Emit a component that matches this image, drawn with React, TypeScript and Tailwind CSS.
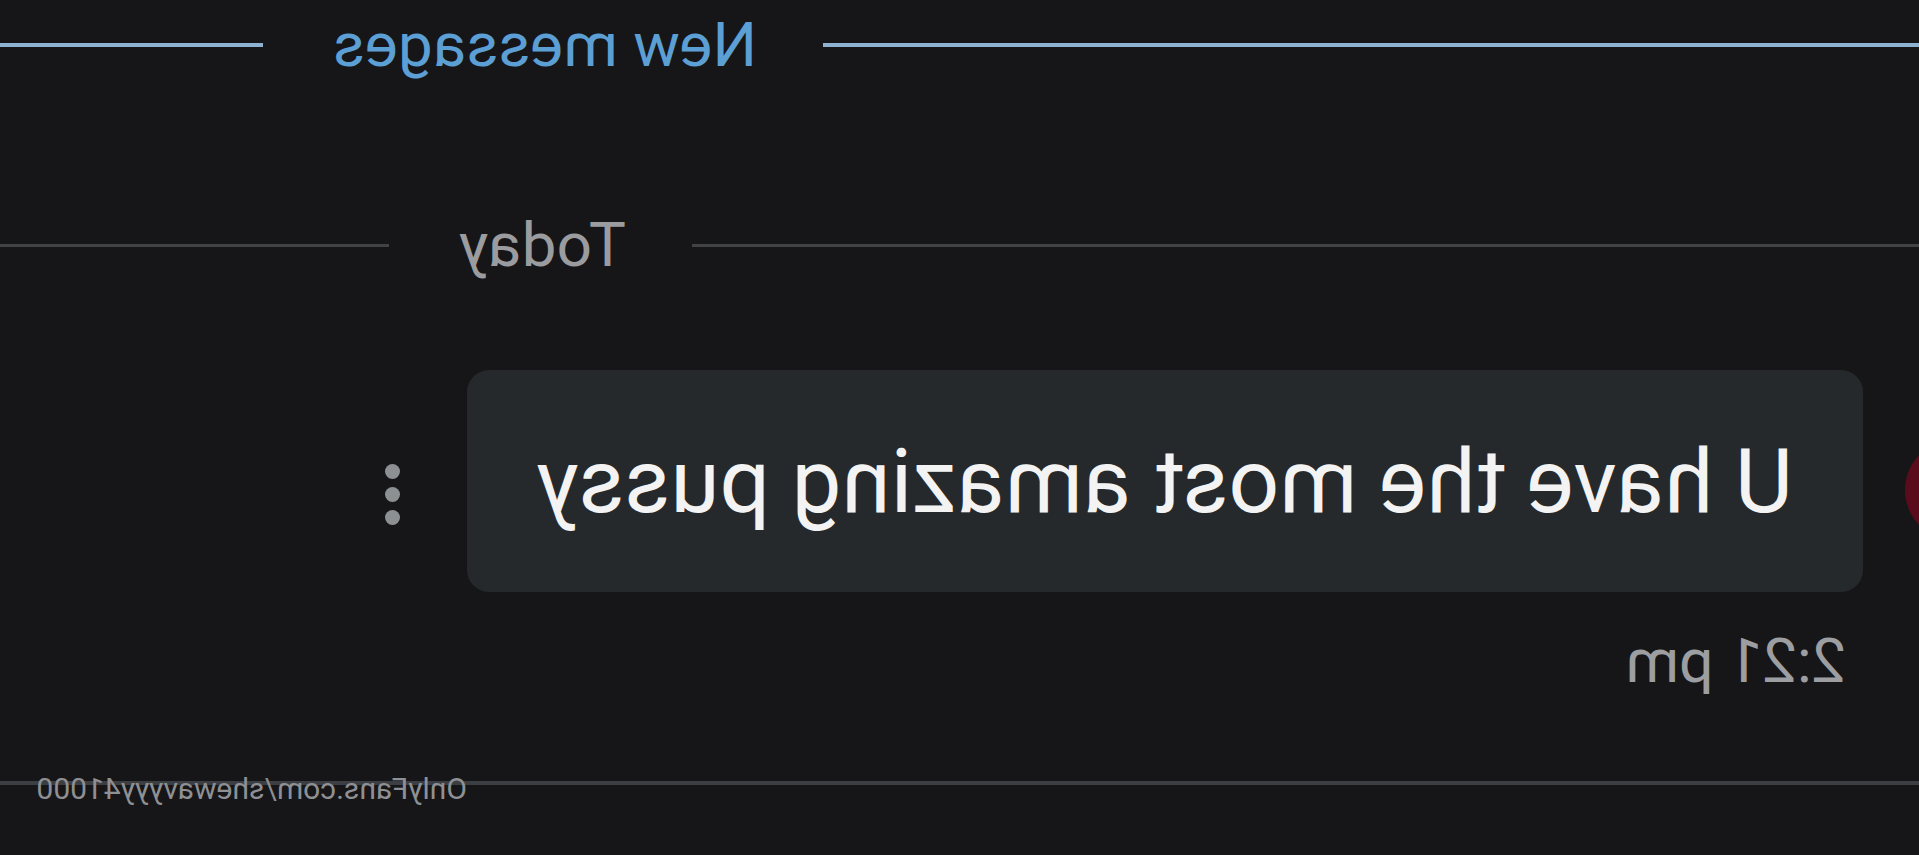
// Chat thread snippet (mirrored capture) — divider rows, one incoming bubble, timestamp.

const DOTS = [0, 1, 2];

function Divider({ label, lineClass, textClass, rightWidth }: { label: string; lineClass: string; textClass: string; rightWidth: string }) {
  return (
    <div className="flex items-center h-[90px]">
      <div className={`flex-1 mr-[66px] ${lineClass}`} />
      <span className={`whitespace-nowrap leading-none ${textClass}`}>{label}</span>
      <div className={`ml-[70px] ${rightWidth} ${lineClass}`} />
    </div>
  );
}

export default function App() {
  return (
    <div className="relative w-[1919px] h-[855px] overflow-hidden bg-[#161618] -scale-x-100 font-['Roboto',sans-serif]">
      <Divider
        label="New messages"
        lineClass="h-[4px] bg-[#8db1cf]"
        textClass="text-[62px] text-[#5c9fd4]"
        rightWidth="w-[263px]"
      />

      <div className="mt-[110px]">
        <Divider
          label="Today"
          lineClass="h-[3px] bg-[#404246]"
          textClass="text-[62px] text-[#9a9c9f]"
          rightWidth="w-[389px]"
        />
      </div>

      <div className="mt-[80px] flex items-center">
        <div className="w-[100px] h-[100px] -ml-[86px] mt-[18px] rounded-full bg-[#5a0c1c] shrink-0" />
        <div className="ml-[42px] w-[1396px] h-[222px] rounded-[22px] bg-[#26292b] flex items-center pl-[70px] shrink-0">
          <p className="text-[89px] leading-none text-[#f3f3f3] whitespace-nowrap">U have the most amazing pussy</p>
        </div>
        <div className="ml-[67px] mt-[26px] flex flex-col gap-[8px]">
          {DOTS.map((d) => (
            <span key={d} className="w-[15px] h-[15px] rounded-full bg-[#8d9093]" />
          ))}
        </div>
      </div>

      <p className="mt-[33px] ml-[73px] text-[61px] leading-[72px] text-[#9c9ea2]">2:21 pm</p>

      <div className="mt-[84px] h-[4px] bg-[#3b3f43]" />

      <span className="absolute left-[1452px] top-[774px] text-[30px] leading-none text-[#8e9093] whitespace-nowrap">
        OnlyFans.com/shewavyyy41000
      </span>
    </div>
  );
}
